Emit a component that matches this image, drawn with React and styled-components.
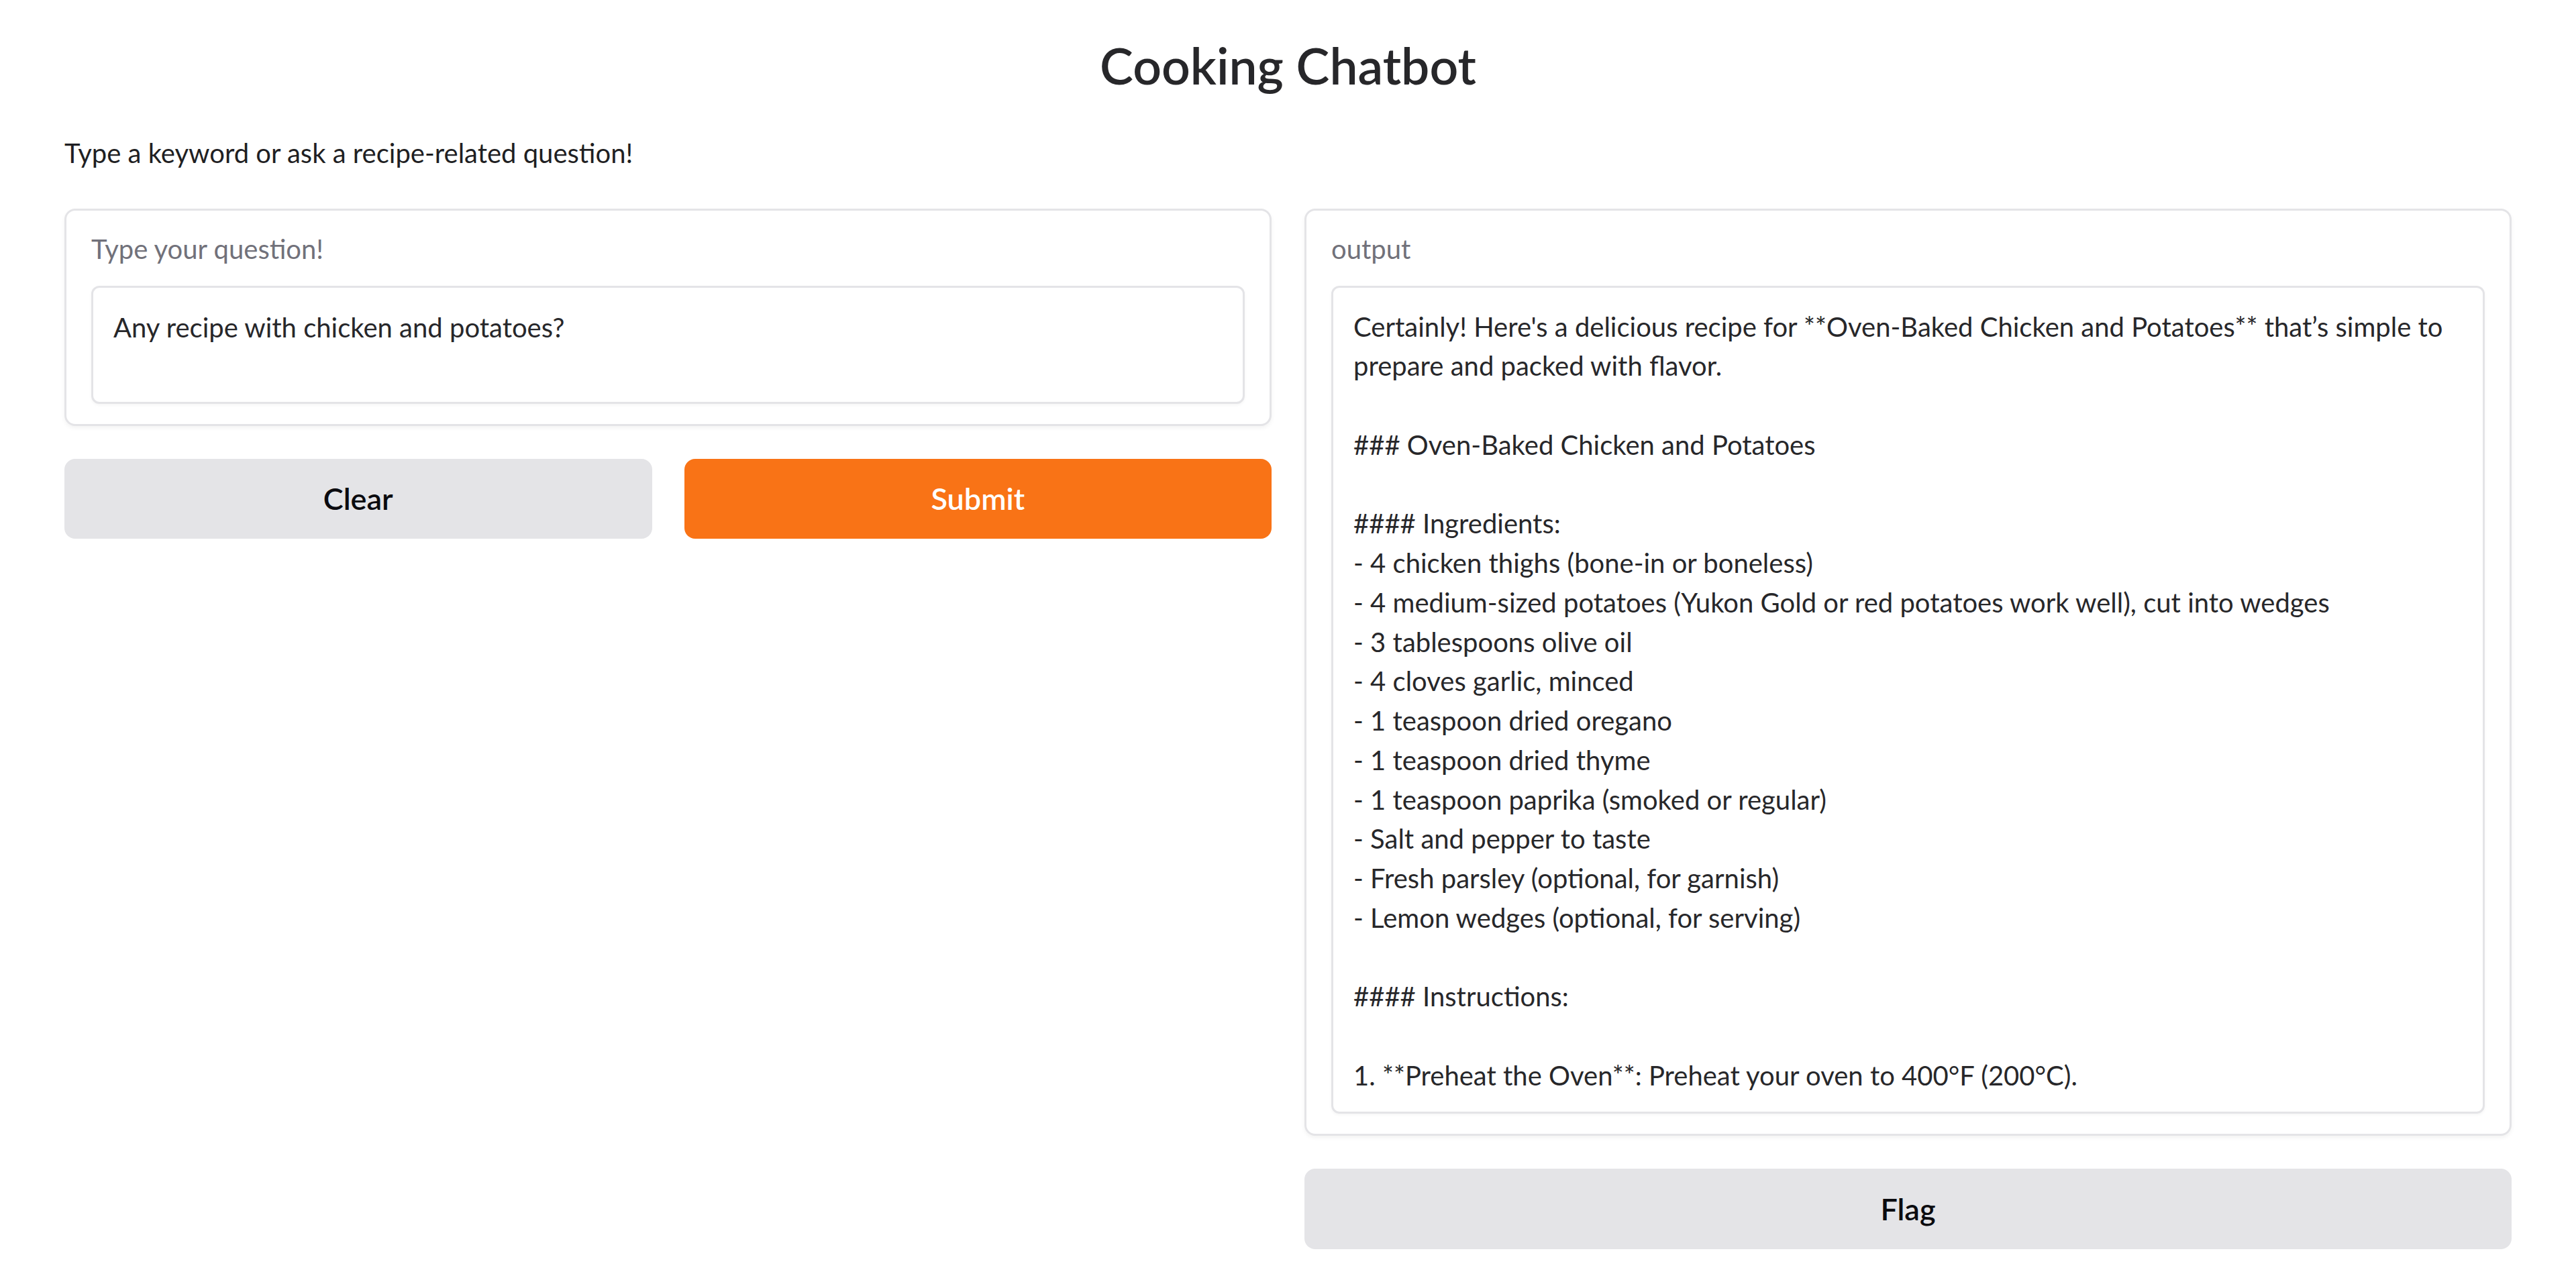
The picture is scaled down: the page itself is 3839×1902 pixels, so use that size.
import React from "react";
import styled, { createGlobalStyle } from "styled-components";

const GlobalStyle = createGlobalStyle`
  html, body { margin: 0; padding: 0; background: #ffffff; }
  body { font-family: Lato, "Noto Sans", sans-serif; color: #27272a; }
  * { box-sizing: border-box; }
`;

const Page = styled.div`
  padding: 57px 96px 40px;
  display: flex;
  flex-direction: column;
`;

const Title = styled.h1`
  margin: 0;
  font-size: 75px;
  line-height: 80px;
  font-weight: 600;
  text-align: center;
  color: #27272a;
`;

const Description = styled.p`
  margin: 62px 0 0;
  font-size: 40px;
  line-height: 58.8px;
  color: #1f1f23;
`;

const Columns = styled.div`
  margin-top: 53px;
  display: flex;
  gap: 49px;
  align-items: flex-start;
`;

const Column = styled.div`
  flex: 1;
  min-width: 0;
  display: flex;
  flex-direction: column;
  gap: 49px;
`;

const Block = styled.div`
  border: 3px solid #e4e4e7;
  border-radius: 16px;
  background: #ffffff;
  box-shadow: 0 3px 6px rgba(0, 0, 0, 0.05);
  padding: 28px 37px 30px;
  display: flex;
  flex-direction: column;
  gap: 25px;
`;

const Label = styled.div`
  font-size: 40px;
  line-height: 58.8px;
  color: #71717a;
`;

const Input = styled.textarea`
  display: block;
  width: 100%;
  height: 176px;
  margin: 0;
  resize: none;
  border: 3px solid #e4e4e7;
  border-radius: 12px;
  box-shadow: 0 2px 4px rgba(0, 0, 0, 0.04);
  padding: 30px 30px 20px;
  font-family: inherit;
  font-size: 40px;
  line-height: 58.8px;
  color: #27272a;
  background: #ffffff;
  outline: none;
  overflow: hidden;
`;

const OutputBox = styled.div`
  height: ${(p) => p.$height}px;
  border: 3px solid #e4e4e7;
  border-radius: 12px;
  box-shadow: 0 2px 4px rgba(0, 0, 0, 0.04);
  padding: 29px 30px 20px;
  font-size: 40px;
  line-height: 58.75px;
  color: #27272a;
  white-space: pre;
  overflow: hidden;
`;

const ButtonRow = styled.div`
  display: flex;
  gap: 48px;
`;

const Button = styled.button`
  flex: 1;
  height: ${(p) => p.$h || 119}px;
  border: none;
  border-radius: 16px;
  font-family: inherit;
  font-size: 45px;
  font-weight: 600;
  cursor: pointer;
  background: ${(p) => (p.$primary ? "#f97316" : "#e4e4e7")};
  color: ${(p) => (p.$primary ? "#ffffff" : "#0b0b0f")};
`;

const outputText = [
  "Certainly! Here's a delicious recipe for **Oven-Baked Chicken and Potatoes** that\u2019s simple to",
  "prepare and packed with flavor.",
  "",
  "### Oven-Baked Chicken and Potatoes",
  "",
  "#### Ingredients:",
  "- 4 chicken thighs (bone-in or boneless)",
  "- 4 medium-sized potatoes (Yukon Gold or red potatoes work well), cut into wedges",
  "- 3 tablespoons olive oil",
  "- 4 cloves garlic, minced",
  "- 1 teaspoon dried oregano",
  "- 1 teaspoon dried thyme",
  "- 1 teaspoon paprika (smoked or regular)",
  "- Salt and pepper to taste",
  "- Fresh parsley (optional, for garnish)",
  "- Lemon wedges (optional, for serving)",
  "",
  "#### Instructions:",
  "",
  "1. **Preheat the Oven**: Preheat your oven to 400\u00b0F (200\u00b0C).",
].join("\n");

export default function App() {
  return (
    <>
      <GlobalStyle />
      <Page>
        <Title>Cooking Chatbot</Title>
        <Description>Type a keyword or ask a recipe-related question!</Description>
        <Columns>
          <Column>
            <Block>
              <Label>Type your question!</Label>
              <Input readOnly value="Any recipe with chicken and potatoes?" />
            </Block>
            <ButtonRow>
              <Button>Clear</Button>
              <Button $primary>Submit</Button>
            </ButtonRow>
          </Column>
          <Column>
            <Block>
              <Label>output</Label>
              <OutputBox $height={1234}>{outputText}</OutputBox>
            </Block>
            <ButtonRow>
              <Button $h={120}>Flag</Button>
            </ButtonRow>
          </Column>
        </Columns>
      </Page>
    </>
  );
}
